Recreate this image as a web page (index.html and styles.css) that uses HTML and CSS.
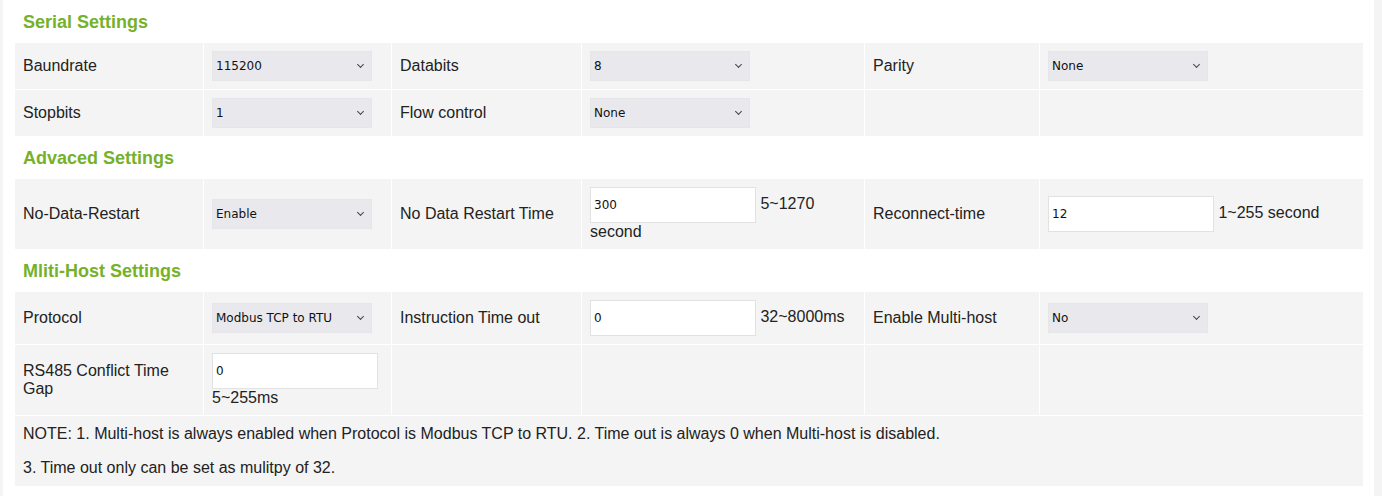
FILE: index.html
```html
<!DOCTYPE html>
<html lang="en">
<head>
    <meta charset="UTF-8">
    <meta name="viewport" content="width=device-width, initial-scale=1.0">
    <title>Serial Settings</title>
    <link rel="stylesheet" href="styles.css">
</head>
<body>
<div class="page">
    <h3 class="section-title">Serial Settings</h3>
    <table class="settings">
        <colgroup>
            <col class="c1"><col class="c2"><col class="c3"><col class="c4"><col class="c5"><col class="c6">
        </colgroup>
        <tr>
            <td>Baundrate</td>
            <td><span class="select-wrap"><select><option>115200</option><option>57600</option><option>9600</option></select></span></td>
            <td>Databits</td>
            <td><span class="select-wrap"><select><option>8</option><option>7</option></select></span></td>
            <td>Parity</td>
            <td><span class="select-wrap"><select><option>None</option><option>Odd</option><option>Even</option></select></span></td>
        </tr>
        <tr>
            <td>Stopbits</td>
            <td><span class="select-wrap"><select><option>1</option><option>2</option></select></span></td>
            <td>Flow control</td>
            <td><span class="select-wrap"><select><option>None</option><option>RTS/CTS</option></select></span></td>
            <td></td>
            <td></td>
        </tr>
    </table>

    <h3 class="section-title">Advaced Settings</h3>
    <table class="settings">
        <colgroup>
            <col class="c1"><col class="c2"><col class="c3"><col class="c4"><col class="c5"><col class="c6">
        </colgroup>
        <tr>
            <td>No-Data-Restart</td>
            <td><span class="select-wrap"><select><option>Enable</option><option>Disable</option></select></span></td>
            <td>No Data Restart Time</td>
            <td><input type="text" value="300"> 5~1270 second</td>
            <td>Reconnect-time</td>
            <td><input type="text" value="12"> 1~255 second</td>
        </tr>
    </table>

    <h3 class="section-title">Mliti-Host Settings</h3>
    <table class="settings">
        <colgroup>
            <col class="c1"><col class="c2"><col class="c3"><col class="c4"><col class="c5"><col class="c6">
        </colgroup>
        <tr>
            <td>Protocol</td>
            <td><span class="select-wrap"><select><option>Modbus TCP to RTU</option><option>None</option></select></span></td>
            <td>Instruction Time out</td>
            <td><input type="text" value="0"> 32~8000ms</td>
            <td>Enable Multi-host</td>
            <td><span class="select-wrap"><select><option>No</option><option>Yes</option></select></span></td>
        </tr>
        <tr>
            <td>RS485 Conflict Time Gap</td>
            <td><input type="text" value="0"> 5~255ms</td>
            <td></td>
            <td></td>
            <td></td>
            <td></td>
        </tr>
        <tr>
            <td colspan="6" class="note">
                <p>NOTE: 1. Multi-host is always enabled when Protocol is Modbus TCP to RTU. 2. Time out is always 0 when Multi-host is disabled.</p>
                <p>3. Time out only can be set as mulitpy of 32.</p>
            </td>
        </tr>
    </table>
</div>
</body>
</html>
```

FILE: styles.css
```css
body {
    font-family: "Liberation Sans", Arial, sans-serif;
    font-size: 16px;
    color: #222;
    margin: 0;
    padding: 0;
    background-color: #fff;
}
.page {
    min-height: 496px;
    box-sizing: border-box;
    padding: 0 11px;
    border-left: 3px solid #f4f4f4;
    border-right: 8px solid #f4f4f4;
}
.section-title {
    margin: 0;
    height: 43px;
    line-height: 44px;
    padding-left: 9px;
    font-size: 18px;
    font-weight: bold;
    color: #76b12a;
}
.settings {
    width: 1349px;
    table-layout: fixed;
    border-collapse: collapse;
}
.c1 { width: 189px; }
.c2 { width: 188px; }
.c3 { width: 190px; }
.c4 { width: 283px; }
.c5 { width: 175px; }
.c6 { width: 324px; }
.settings td {
    background-color: #f4f4f4;
    border: 1px solid #fff;
    padding: 8px;
    vertical-align: middle;
    line-height: 18px;
}
.settings tr:first-child td {
    border-top: 0;
}
.settings tr:last-child td {
    border-bottom: 0;
}
.select-wrap {
    position: relative;
    display: inline-block;
    vertical-align: middle;
}
.select-wrap::after {
    content: "";
    position: absolute;
    right: 9px;
    top: 11px;
    width: 4px;
    height: 4px;
    border-right: 1px solid #444;
    border-bottom: 1px solid #444;
    transform: rotate(45deg);
    pointer-events: none;
}
.settings select {
    -webkit-appearance: none;
    appearance: none;
    display: block;
    width: 160px;
    height: 30px;
    padding: 0 0 0 3px;
    border: 1px solid #e6e6ea;
    border-radius: 0;
    background-color: #e9e9ed;
    font-family: "DejaVu Sans", sans-serif;
    font-size: 12px;
    color: #111;
}
.settings input[type="text"] {
    box-sizing: border-box;
    width: 166px;
    height: 36px;
    padding: 0 3px;
    border: 1px solid #e2e2e2;
    background-color: #fff;
    font-family: "DejaVu Sans", sans-serif;
    font-size: 12px;
    color: #111;
}
.settings td.note {
    padding: 9px 8px;
}
.note p {
    margin: 0;
}
.note p + p {
    margin-top: 16px;
}
```
